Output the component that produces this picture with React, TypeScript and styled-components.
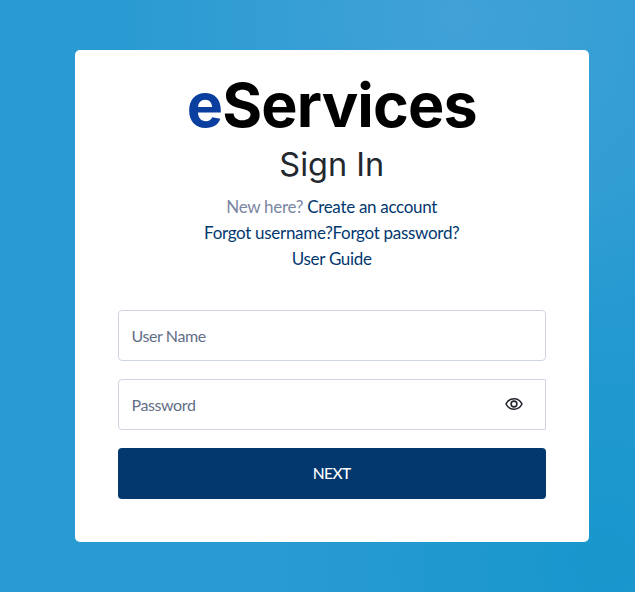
import styled, { createGlobalStyle } from "styled-components";

const GlobalStyle = createGlobalStyle`
  html, body { margin: 0; padding: 0; }
  body { font-family: "Lato", "Noto Sans", sans-serif; }
`;

const Page = styled.div`
  box-sizing: border-box;
  width: 635px;
  height: 592px;
  overflow: hidden;
  padding: 50px 0 0 75px;
  background:
    radial-gradient(circle at 72% 3%, #41a2d7 0, rgba(65, 162, 215, 0) 45%),
    radial-gradient(circle at 95% 95%, #1897cd 0, rgba(24, 151, 205, 0) 45%),
    #2a9bd2;
`;

const Card = styled.main`
  box-sizing: border-box;
  width: 514px;
  height: 492px;
  padding: 24px 43px 0 42.5px;
  background: #fff;
  border-radius: 5px;
`;

const Logo = styled.div`
  font-family: "Inter", "Liberation Sans", sans-serif;
  font-weight: 650;
  font-size: 61px;
  line-height: 62px;
  letter-spacing: -0.9px;
  text-align: center;
  color: #000;
`;

const LogoAccent = styled.span`
  color: #0a3fa0;
`;

const Title = styled.h1`
  margin: 7px 0 0;
  font-family: "Inter", "Roboto", sans-serif;
  font-weight: 400;
  font-size: 32.5px;
  line-height: 44px;
  text-align: center;
  color: #23272e;
`;

const Links = styled.div`
  margin-top: 7px;
  font-size: 17px;
  line-height: 26px;
  letter-spacing: -0.3px;
  text-align: center;
  color: #7a86a3;
`;

const Line = styled.div``;

const Link = styled.a`
  color: #03386f;
  text-decoration: none;
`;

const Form = styled.form`
  display: flex;
  flex-direction: column;
  gap: 17.5px;
  margin-top: 37.5px;
`;

const Field = styled.div<{ $squareRight?: boolean }>`
  box-sizing: border-box;
  display: flex;
  align-items: center;
  justify-content: space-between;
  height: 51.5px;
  padding: 0 22px 0 13px;
  border: 1.5px solid #d0d5e2;
  border-radius: ${(p) => (p.$squareRight ? "4px 0 0 4px" : "4px")};
  background: #fff;
`;

const Input = styled.input`
  flex: 1;
  min-width: 0;
  padding: 0;
  border: 0;
  outline: 0;
  background: transparent;
  font-family: inherit;
  font-size: 16px;
  letter-spacing: -0.4px;
  color: #333;

  &::placeholder {
    color: #626e87;
    opacity: 1;
  }
`;

const EyeButton = styled.button`
  display: flex;
  padding: 0;
  border: 0;
  background: none;
  color: #23272e;
`;

const NextButton = styled.button`
  height: 51.5px;
  border: 0;
  border-radius: 4px;
  background: #03386f;
  color: #fff;
  font-family: inherit;
  font-size: 15.5px;
  font-weight: 500;
  letter-spacing: -0.5px;
`;

function EyeIcon() {
  return (
    <svg width="18" height="18" viewBox="0 0 18 18" fill="none" stroke="currentColor" strokeWidth="1.6">
      <path d="M1 9c1.700-3.400 4.600-5.200 8-5.200s6.300 1.800 8 5.200c-1.700 3.400-4.600 5.200-8 5.200S2.700 12.400 1 9Z" />
      <circle cx="9" cy="9" r="2.900" />
    </svg>
  );
}

export default function App() {
  return (
    <>
      <GlobalStyle />
      <Page>
        <Card>
          <Logo>
            <LogoAccent>e</LogoAccent>Services
          </Logo>
          <Title>Sign In</Title>
          <Links>
            <Line>
              New here? <Link href="#">Create an account</Link>
            </Line>
            <Line>
              <Link href="#">Forgot username?</Link>
              <Link href="#">Forgot password?</Link>
            </Line>
            <Line>
              <Link href="#">User Guide</Link>
            </Line>
          </Links>
          <Form>
            <Field>
              <Input placeholder="User Name" />
            </Field>
            <Field $squareRight>
              <Input placeholder="Password" type="password" />
              <EyeButton type="button" aria-label="Show password">
                <EyeIcon />
              </EyeButton>
            </Field>
            <NextButton type="button">NEXT</NextButton>
          </Form>
        </Card>
      </Page>
    </>
  );
}
